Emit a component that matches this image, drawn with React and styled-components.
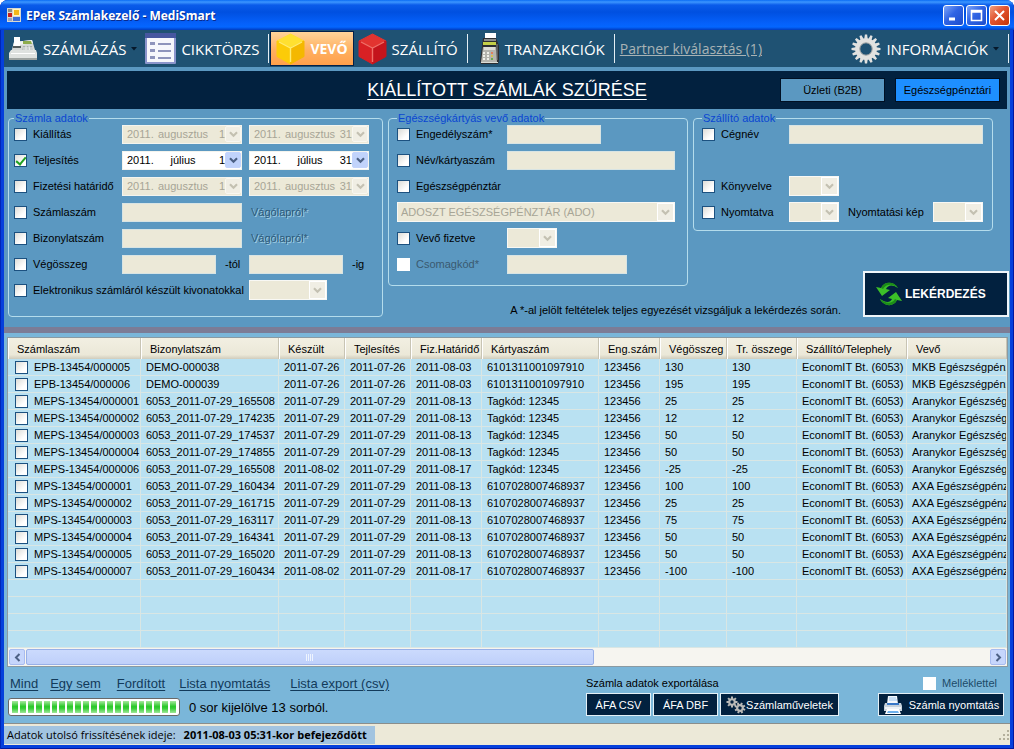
import React, { useState } from 'react';
import styled, { createGlobalStyle } from 'styled-components';

const GlobalStyle = createGlobalStyle`
    * {
        box-sizing: border-box;
    }

    body {
        margin: 0;
        background: #ffffff;
        font-family: "Liberation Sans", Arial, sans-serif;
        font-size: 11px;
        color: #000000;
    }

    button, input, select {
        font: inherit;
        color: inherit;
        margin: 0;
        padding: 0;
    }
`;

const Window = styled.div`
    min-height: 100vh;
    display: flex;
    flex-direction: column;
    padding: 0 4px 4px;
    border-radius: 8px 8px 0 0;
    overflow: hidden;
    background: #0540dc;
    box-shadow: inset 1px 0 0 #0026b8, inset -1px -1px 0 #0018a0;
`;

const TitleBar = styled.header`
    height: 30px;
    margin: 0 -4px;
    padding: 0 4px 0 7px;
    display: flex;
    align-items: center;
    gap: 5px;
    background: linear-gradient(#0a6cf4 0, #3c96ff 2px, #0a5cea 5px, #0050e0 12px, #0560fa 23px, #0466ff 27px, #003cc0 30px);
`;

const WindowTitle = styled.h1`
    flex: 1;
    margin: 0;
    font: bold 12px "Open Sans", sans-serif;
    color: #ffffff;
    text-shadow: 1px 1px 0 #0a2a8c;
`;

const WindowControls = styled.div`
    display: flex;
    gap: 2px;
`;

const ControlButton = styled.button`
    width: 21px;
    height: 21px;
    border: 1px solid #ffffff;
    border-radius: 3px;
    background: ${props => props.$close
        ? 'linear-gradient(135deg, #f0a080, #e25430 45%, #c43408)'
        : 'linear-gradient(135deg, #7fa6f8, #3064e4 45%, #1c4ccc)'};
    display: flex;
    align-items: center;
    justify-content: center;
`;

const Toolbar = styled.nav`
    height: 37px;
    padding-left: 4px;
    display: flex;
    align-items: center;
    background: #1f5273;
    color: #ffffff;
    font-family: "Open Sans", sans-serif;
    font-size: 15px;
`;

const ToolButton = styled.button`
    height: 35px;
    padding: 0 ${props => props.$active ? '5px' : '3px'};
    display: flex;
    align-items: center;
    gap: 5px;
    white-space: nowrap;
    border: 1px solid ${props => props.$active ? '#02214a' : 'transparent'};
    background: ${props => props.$active ? 'linear-gradient(#ffd49a, #ffb060 55%, #ffa04c)' : 'none'};
    font-weight: ${props => props.$active ? 700 : 400};
    font-size: ${props => props.$active ? '14px' : '15px'};

    &:first-child {
        padding-left: 0;
    }
`;

const Separator = styled.span`
    width: 1px;
    height: 29px;
    margin: 0 ${props => props.$wide ? '8px' : '1px'} 0 5px;
    background: #e4eef4;
`;

const PartnerLink = styled.a`
    margin-left: -3px;
    font-size: 14px;
    color: #a9b3b5;
    white-space: nowrap;
`;

const Spacer = styled.span`
    flex: 1;
`;

const Banner = styled.div`
    height: 46px;
    padding: 4px 3px;
    background: #5b98c1;
`;

const BannerInner = styled.div`
    height: 38px;
    padding: 0 7px;
    display: grid;
    grid-template-columns: 1fr auto 1fr;
    align-items: center;
    background: #02213f;
`;

const BannerTitle = styled.h2`
    grid-column: 2;
    margin: 0;
    font-size: 18px;
    font-weight: 400;
    color: #ffffff;
    text-decoration: underline;
    text-underline-offset: 3px;
`;

const ModeButtons = styled.div`
    display: flex;
    justify-content: flex-end;
    gap: 10px;
`;

const ModeButton = styled.button`
    width: 105px;
    height: 24px;
    border: 1px solid #001024;
    background: ${props => props.$active ? '#1e8fff' : '#5b98c1'};
`;

const Filters = styled.form`
    padding: 0 1px 10px 4px;
    margin-top: -1px;
    display: grid;
    grid-template-columns: minmax(0, 375fr) minmax(0, 300fr) minmax(0, 316fr);
    grid-template-rows: auto 1fr;
    column-gap: 5px;
    background: #5b98c1;
`;

const Group = styled.fieldset`
    min-width: 0;
    margin: 0 ${props => props.$inset ? '16px' : '0'} 0 0;
    padding: 0 ${props => props.$pad || '8px'} ${props => props.$bottom || '8px'};
    border: 1px solid #b4dcec;
    border-radius: 4px;
    align-self: start;
    grid-column: ${props => props.$column};
    grid-row: ${props => props.$tall ? '1 / span 2' : '1'};
`;

const Legend = styled.legend`
    height: 12px;
    padding: 0 1px;
    line-height: 12px;
    color: #0a46d2;
`;

const Rows = styled.div`
    display: grid;
    grid-template-columns: ${props => props.$columns};
    grid-auto-rows: 20px;
    gap: 6px 7px;
    align-items: center;
`;

const Cell = styled.div`
    display: flex;
    align-items: center;
    gap: 9px;
    white-space: nowrap;
    grid-column: ${props => props.$span ? `span ${props.$span}` : 'auto'};
`;

const CheckLabel = styled.label`
    display: flex;
    align-items: center;
    gap: 6px;
    white-space: nowrap;
    grid-column: ${props => props.$span ? `span ${props.$span}` : 'auto'};
    color: ${props => props.$dim || 'inherit'};
`;

const Tick = styled.input.attrs({ type: 'checkbox' })`
    appearance: none;
    flex: none;
    width: 13px;
    height: 13px;
    display: flex;
    justify-content: center;
    border: 1px solid #1c5180;
    background: linear-gradient(135deg, #dcdcd7, #ffffff 70%);

    &:disabled {
        border-color: #ffffff;
        background: #ffffff;
    }

    &:checked::after {
        content: "";
        width: 4px;
        height: 8px;
        border: solid #21a121;
        border-width: 0 2px 2px 0;
        transform: rotate(40deg);
    }
`;

const TextField = styled.input`
    width: ${props => props.$width || '100%'};
    height: 19px;
    border: 1px solid #d8e4e4;
    background: #ece9d8;
`;

const SelectBox = styled.div`
    position: relative;
    width: ${props => props.$width || '100%'};
    grid-column: ${props => props.$span ? `span ${props.$span}` : 'auto'};
`;

const SelectField = styled.select`
    appearance: none;
    width: 100%;
    height: 20px;
    padding-left: 3px;
    display: block;
    border: 1px solid #f8f8f4;
    border-radius: 0;
    background: #ece9d8;
    color: #a7a596;
    opacity: 1;
`;

const SelectArrow = styled.span`
    position: absolute;
    top: 1px;
    right: 1px;
    width: 17px;
    height: 18px;
    display: flex;
    align-items: center;
    justify-content: center;
    border: 1px solid #ffffff;
    background: #f0eee4;
    pointer-events: none;
`;

const DateBox = styled.div`
    width: 100%;
    height: 19px;
    padding-left: 4px;
    display: flex;
    align-items: center;
    border: 1px solid #f4f4ee;
    background: ${props => props.$off ? '#ece9d8' : '#ffffff'};
    color: ${props => props.$off ? '#a7a596' : '#000000'};
`;

const DatePart = styled.input`
    width: ${props => props.$width};
    min-width: 0;
    flex: ${props => props.$grow ? 1 : 'none'};
    border: 0;
    background: none;
    text-align: ${props => props.$align || 'left'};
`;

const DateButton = styled.button`
    width: 16px;
    height: 16px;
    display: flex;
    align-items: center;
    justify-content: center;
    border: 1px solid ${props => props.disabled ? '#f8f7f0' : '#c4d4fc'};
    border-radius: 2px;
    background: ${props => props.disabled ? '#f0eee4' : '#c1d3fb'};
`;

const PasteButton = styled.button`
    padding-left: 2px;
    border: 0;
    background: none;
    text-align: left;
    color: #2c5878;
    text-shadow: 1px 1px 0 #a4d0e4;
`;

const Note = styled.p`
    grid-column: 2 / 4;
    grid-row: 2;
    align-self: end;
    justify-self: end;
    margin: 0;
    padding-right: 168px;
    line-height: 13px;
    white-space: nowrap;
`;

const QueryButton = styled.button`
    grid-column: 3;
    grid-row: 1 / 3;
    align-self: end;
    justify-self: end;
    width: 146px;
    height: 46px;
    padding-left: 10px;
    display: flex;
    align-items: center;
    gap: 2px;
    border: 2px solid #f0f6fa;
    background: #02213f;
    color: #ffffff;
    font-size: 12px;
    font-weight: 700;
`;

const Splitter = styled.div`
    height: 6px;
    background: #7c7c96;
`;

const Results = styled.section`
    flex: 1;
    padding: 4px 2px 0 3px;
    display: flex;
    flex-direction: column;
    background: #7ab6d9;
`;

const ListFrame = styled.div`
    flex: 1;
    display: flex;
    flex-direction: column;
    border: 1px solid #8a9aa2;
    background: #b9e1f2;
`;

const List = styled.table`
    width: 100%;
    table-layout: fixed;
    border-collapse: separate;
    border-spacing: 0;
    white-space: nowrap;
`;

const HeadCell = styled.th`
    height: 21px;
    padding: 0 0 0 9px;
    overflow: hidden;
    text-align: left;
    font-weight: 400;
    background: linear-gradient(#f2efe2, #ebe8d8 80%, #d0ccbc);
    border-right: 1px solid #c8c4b4;
    box-shadow: inset 1px 0 0 #ffffff;
`;

const BodyCell = styled.td`
    height: 17px;
    padding: 0 0 0 5px;
    overflow: hidden;
    line-height: 14px;
    border-right: 1px solid #d9e6e4;
    border-bottom: 1px solid #d9e6e4;

    &:first-child {
        padding-left: 7px;
    }
`;

const ScrollBar = styled.div`
    height: 18px;
    margin-top: auto;
    padding: 1px;
    display: flex;
    gap: 1px;
    background: #f6f5f0;
`;

const ScrollButton = styled.button`
    width: 16px;
    display: flex;
    align-items: center;
    justify-content: center;
    border: 1px solid #a8bcf0;
    border-radius: 2px;
    background: #c6d6fc;
`;

const ScrollTrack = styled.div`
    flex: 1;
`;

const ScrollThumb = styled.div`
    width: 59%;
    height: 16px;
    display: flex;
    align-items: center;
    justify-content: center;
    border: 1px solid #98b0e8;
    border-radius: 2px;
    background: linear-gradient(#cbdafd, #bfd0fa);
`;

const Footer = styled.footer`
    height: 56px;
    padding: 8px 6px 0 4px;
    display: flex;
    background: #7ab6d9;
`;

const FooterLeft = styled.div`
    flex: 0 1 578px;
`;

const LinkRow = styled.div`
    height: 17px;
    padding-left: 2px;
    display: flex;
    align-items: center;
    font-size: 13px;
`;

const ActionLink = styled.a`
    margin-right: ${props => props.$gap || '12px'};
    color: #123a5a;
    text-underline-offset: 2px;
`;

const ProgressRow = styled.div`
    margin-top: 6px;
    display: flex;
    align-items: center;
    gap: 9px;
    font-size: 13px;
`;

const Progress = styled.div`
    width: 172px;
    height: 18px;
    padding: 2px 3px;
    display: flex;
    gap: 2px;
    border: 1px solid #686868;
    border-radius: 3px;
    background: #ffffff;
`;

const ProgressBlock = styled.span`
    flex: 1;
    background: linear-gradient(#a8e8a0, #2cc82c 45%, #34cc34 60%, #a0e898);
`;

const FooterBlock = styled.div`
    margin-left: ${props => props.$right ? 'auto' : '0'};
    display: flex;
    flex-direction: column;
    align-items: ${props => props.$right ? 'flex-end' : 'flex-start'};
    gap: 2px;
`;

const Caption = styled.div`
    height: 16px;
    display: flex;
    align-items: center;
    padding-right: ${props => props.$right ? '7px' : '0'};
`;

const ButtonRow = styled.div`
    display: flex;
    gap: 2px;
`;

const DarkButton = styled.button`
    width: ${props => props.$width};
    height: 23px;
    display: flex;
    align-items: center;
    justify-content: center;
    gap: ${props => props.$gap || '0'};
    border: 1px solid #e4f0f6;
    background: #02213f;
    color: #ffffff;
    white-space: nowrap;
`;

const StatusBar = styled.div`
    height: 22px;
    display: flex;
    align-items: center;
    justify-content: space-between;
    border-top: 1px solid #8a8e8c;
    background: #ece9d8;
    font-family: "Open Sans", sans-serif;
`;

const StatusText = styled.div`
    height: 18px;
    padding: 0 8px 0 3px;
    display: flex;
    align-items: center;
    gap: 8px;
    background: #a2c4e0;
    white-space: nowrap;
`;

const columns = [
    { title: 'Számlaszám', width: 133 },
    { title: 'Bizonylatszám', width: 138 },
    { title: 'Készült', width: 66 },
    { title: 'Tejlesítés', width: 66 },
    { title: 'Fiz.Határidő', width: 71 },
    { title: 'Kártyaszám', width: 117 },
    { title: 'Eng.szám', width: 61 },
    { title: 'Végösszeg', width: 67 },
    { title: 'Tr. összege', width: 70 },
    { title: 'Szállító/Telephely', width: 110 },
    { title: 'Vevő' },
];

const MKB = 'MKB Egészségpénztár';
const ARANYKOR = 'Aranykor Egészségpénztár';
const AXA = 'AXA Egészségpénztár';

const invoices = [
    ['EPB-13454/000005', 'DEMO-000038', '2011-07-26', '2011-07-26', '2011-08-03', '6101311001097910', 130, MKB],
    ['EPB-13454/000006', 'DEMO-000039', '2011-07-26', '2011-07-26', '2011-08-03', '6101311001097910', 195, MKB],
    ['MEPS-13454/000001', '6053_2011-07-29_165508', '2011-07-29', '2011-07-29', '2011-08-13', 'Tagkód: 12345', 25, ARANYKOR],
    ['MEPS-13454/000002', '6053_2011-07-29_174235', '2011-07-29', '2011-07-29', '2011-08-13', 'Tagkód: 12345', 12, ARANYKOR],
    ['MEPS-13454/000003', '6053_2011-07-29_174537', '2011-07-29', '2011-07-29', '2011-08-13', 'Tagkód: 12345', 50, ARANYKOR],
    ['MEPS-13454/000004', '6053_2011-07-29_174855', '2011-07-29', '2011-07-29', '2011-08-13', 'Tagkód: 12345', 50, ARANYKOR],
    ['MEPS-13454/000006', '6053_2011-07-29_165508', '2011-08-02', '2011-07-29', '2011-08-17', 'Tagkód: 12345', -25, ARANYKOR],
    ['MPS-13454/000001', '6053_2011-07-29_160434', '2011-07-29', '2011-07-29', '2011-08-13', '6107028007468937', 100, AXA],
    ['MPS-13454/000002', '6053_2011-07-29_161715', '2011-07-29', '2011-07-29', '2011-08-13', '6107028007468937', 25, AXA],
    ['MPS-13454/000003', '6053_2011-07-29_163117', '2011-07-29', '2011-07-29', '2011-08-13', '6107028007468937', 75, AXA],
    ['MPS-13454/000004', '6053_2011-07-29_164341', '2011-07-29', '2011-07-29', '2011-08-13', '6107028007468937', 50, AXA],
    ['MPS-13454/000005', '6053_2011-07-29_165020', '2011-07-29', '2011-07-29', '2011-08-13', '6107028007468937', 50, AXA],
    ['MPS-13454/000007', '6053_2011-07-29_160434', '2011-08-02', '2011-07-29', '2011-08-17', '6107028007468937', -100, AXA],
];

const Chevron = ({ color = '#c4c1b2' }) => (
    <svg width="9" height="7" viewBox="0 0 9 7">
        <path d="M1 1.2 4.5 4.7 8 1.2" fill="none" stroke={color} strokeWidth="2.2" />
    </svg>
);

const SideChevron = ({ right }) => (
    <svg width="7" height="9" viewBox="0 0 7 9">
        <path d={right ? 'M1.5 1 5 4.5 1.5 8' : 'M5.5 1 2 4.5 5.5 8'} fill="none" stroke="#4d6185" strokeWidth="2" />
    </svg>
);

const MenuArrow = () => (
    <svg width="6" height="4" viewBox="0 0 6 4"><path d="M0 0h6L3 3.5z" fill="#06182a" /></svg>
);

const AppIcon = () => (
    <svg width="14" height="14" viewBox="0 0 14 14">
        <rect width="14" height="14" fill="#d8d8d0" />
        <rect x="1" y="5" width="4" height="4" fill="#c8201c" />
        <rect x="6" y="1" width="7" height="7" fill="#fff6c0" />
        <rect x="7" y="2" width="5" height="5" fill="#f4b818" />
        <rect x="1" y="1" width="4" height="3" fill="#8c8c88" />
        <rect x="1" y="10" width="4" height="3" fill="#9aa4c0" />
        <rect x="6" y="9" width="7" height="4" fill="#3d6fd8" />
    </svg>
);

const RegisterIcon = () => (
    <svg width="29" height="24" viewBox="0 0 29 24">
        <path d="M5 5 23 3 27 16H2z" fill="#d5d8d6" />
        <path d="M5 5 23 3 24 6 4 9z" fill="#f0f2f0" />
        <path d="M5 0h6v10H5z" fill="#ffffff" />
        <path d="M4 9h8v2H4z" fill="#555d5c" />
        <path d="M14 4h8l1 3h-9z" fill="#8dac4c" />
        <path d="M14 9h9l2 6H13z" fill="#aab0b0" />
        <path d="M14 11h10M14 13h11M17 9v6M20 9l1 6" stroke="#eceeee" />
        <path d="M2 13h25l1 3v7H0v-7z" fill="#dfe2e0" />
        <path d="M0 21h28v2H0z" fill="#9da3a1" />
        <path d="M2 16h24v1H2z" fill="#ffffff" />
    </svg>
);

const ListIcon = () => (
    <svg width="31" height="31" viewBox="0 0 31 31">
        <rect width="31" height="31" rx="1" fill="#8b95cc" />
        <rect width="31" height="5" fill="#4657a0" />
        <rect x="2" y="5" width="27" height="24" fill="#f6f7fc" />
        <g fill="#8e94bc">
            <rect x="5" y="9" width="5" height="3" /><rect x="5" y="16" width="5" height="3" /><rect x="5" y="23" width="5" height="3" />
            <rect x="13" y="10" width="13" height="2" /><rect x="13" y="17" width="13" height="2" /><rect x="13" y="24" width="13" height="2" />
        </g>
    </svg>
);

const Cube = ({ top, left, right, line }) => (
    <svg width="29" height="32" viewBox="0 0 29 32">
        <path d="M14.5 1 28 8 14.5 15 1 8z" fill={top} stroke={top} strokeLinejoin="round" />
        <path d="M1 8 14.5 15v16L1 23.5z" fill={left} stroke={left} strokeLinejoin="round" />
        <path d="M28 8 14.5 15v16L28 23.5z" fill={right} stroke={right} strokeLinejoin="round" />
        <path d="M3 9 14.5 15 26 9M14.5 15v14" fill="none" stroke={line} strokeWidth="1.4" />
    </svg>
);

const TerminalIcon = () => (
    <svg width="20" height="32" viewBox="0 0 20 32">
        <path d="M3 5h13l2 5 1 3v15l-1 3H1l-1-3 2-15z" fill="#2c2e32" />
        <path d="M5 0h11v5H5z" fill="#ffffff" />
        <path d="M4 6h12v2H4z" fill="#8a8c8a" />
        <path d="M3 9h13v3H3z" fill="#c3cf48" />
        <path d="M3 14h13l1 15H1z" fill="#b4b4ae" />
        <path d="M4 14h11v3H4z" fill="#dcdcd6" />
        <path d="M3 20h2M7 20h2M3 23h2M7 23h2M3 26h2M7 26h2" stroke="#f0f0ea" strokeWidth="2" />
        <path d="M11 20h2" stroke="#e08060" strokeWidth="2" />
        <path d="M11 23h2" stroke="#d8c050" strokeWidth="2" />
        <path d="M11 26h2" stroke="#68a850" strokeWidth="2" />
        <path d="M17 11v16" stroke="#8a8c8a" />
        <path d="M1 29h17v1H1z" fill="#dcdcd6" />
    </svg>
);

const Gear = ({ size, color, hole, teeth = 16 }) => (
    <svg width={size} height={size} viewBox="-15 -15 30 30">
        {Array.from({ length: teeth }, (_, i) => (
            <path key={i} d="M-1.9-9-1.1-14.5H1.1L1.9-9z" fill={color} transform={`rotate(${i * 360 / teeth})`} />
        ))}
        <circle r="8.5" fill="none" stroke={color} strokeWidth="4.6" />
        <circle r="6.2" fill="none" stroke={hole} strokeWidth="1" />
    </svg>
);

const GearPair = () => (
    <svg width="20" height="18" viewBox="0 0 20 18">
        {[[6, 6, 0], [14, 12, 20]].map(([x, y, turn]) => (
            <g key={x} transform={`translate(${x} ${y}) rotate(${turn})`}>
                {[0, 45, 90, 135].map(a => <rect key={a} x="-1" y="-5.5" width="2" height="11" fill="#b9b9b7" transform={`rotate(${a})`} />)}
                <circle r="3.8" fill="#b9b9b7" />
                <circle r="1.7" fill="#02213f" />
            </g>
        ))}
    </svg>
);

const RefreshIcon = () => (
    <svg width="28" height="26" viewBox="0 0 28 26">
        <path d="M23 7C19 0 9 0 6 7L1 6l6 9 8-6-4-1c2-4 6-5 12-1z" fill="#3cc028" />
        <path d="M23 7C19 0 9 0 6 7l2 1c3-5 9-6 15-1z" fill="#1c8c18" />
        <path d="M5 18c4 8 14 8 17 1l5 1-6-9-8 6 4 1c-2 4-6 4-12 0z" fill="#3cc028" />
        <path d="M5 18c4 8 14 8 17 1l-2-1c-3 5-9 5-15 0z" fill="#1c8c18" />
    </svg>
);

const PrinterIcon = () => (
    <svg width="20" height="20" viewBox="0 0 20 20">
        <path d="M5 1h9l1 8H4z" fill="#f4f8fc" />
        <path d="M6 3h7M6 5h8" stroke="#9cc4ec" />
        <path d="M2 8h16l1 3v5H1v-5z" fill="#c6d2dc" />
        <path d="M4 8h12v2H4z" fill="#3878c8" />
        <path d="M2 12h16v2H2z" fill="#eef3f7" />
        <path d="M4 14h12l2 5H2z" fill="#ffffff" />
        <path d="M5 16h10l1 2H4z" fill="#6cb0ec" />
    </svg>
);

const Grip = () => (
    <svg width="13" height="13" viewBox="0 0 13 13" fill="#b4b09c">
        {[[10, 2], [6, 6], [10, 6], [2, 10], [6, 10], [10, 10]].map(([x, y]) => <rect key={`${x}-${y}`} x={x} y={y} width="2" height="2" />)}
    </svg>
);

function Check({ label, span, dim, ...rest }) {
    return (
        <CheckLabel $span={span} $dim={dim}>
            <Tick {...rest} />
            {label}
        </CheckLabel>
    )
}

function Select({ label, width, span, children }) {
    return (
        <SelectBox $width={width} $span={span}>
            <SelectField aria-label={label} disabled>{children}</SelectField>
            <SelectArrow><Chevron /></SelectArrow>
        </SelectBox>
    )
}

function DatePicker({ label, month, day, disabled }) {
    return (
        <DateBox $off={disabled} role="group" aria-label={label}>
            <DatePart $width="28px" aria-label="Év" defaultValue="2011." disabled={disabled} />
            <DatePart $grow $width="50px" $align="center" aria-label="Hónap" defaultValue={month} disabled={disabled} />
            <DatePart $width="14px" $align="right" aria-label="Nap" defaultValue={day} disabled={disabled} />
            <DateButton type="button" aria-label="Naptár" disabled={disabled}>
                <Chevron color={disabled ? '#c4c1b2' : '#4d6185'} />
            </DateButton>
        </DateBox>
    )
}

function App() {
    const [mode, setMode] = useState('fund');

    return (
        <>
            <GlobalStyle />
            <Window>
                <TitleBar>
                    <AppIcon />
                    <WindowTitle>EPeR Számlakezelő - MediSmart</WindowTitle>
                    <WindowControls>
                        <ControlButton aria-label="Kis méret">
                            <svg width="13" height="13"><path d="M2 10h6" stroke="#fff" strokeWidth="3" /></svg>
                        </ControlButton>
                        <ControlButton aria-label="Teljes méret">
                            <svg width="13" height="13"><path d="M1.5 1.5h10v10h-10zM1 3h11" fill="none" stroke="#fff" strokeWidth="1.6" /></svg>
                        </ControlButton>
                        <ControlButton $close aria-label="Bezárás">
                            <svg width="13" height="13"><path d="M2 2l9 9M11 2l-9 9" stroke="#fff" strokeWidth="2" /></svg>
                        </ControlButton>
                    </WindowControls>
                </TitleBar>

                <Toolbar>
                    <ToolButton><RegisterIcon />SZÁMLÁZÁS<MenuArrow /></ToolButton>
                    <ToolButton><ListIcon />CIKKTÖRZS</ToolButton>
                    <Separator />
                    <ToolButton $active><Cube top="#ffe030" left="#fccb08" right="#f4b800" line="#ffec70" />VEVŐ</ToolButton>
                    <ToolButton><Cube top="#e23430" left="#d82024" right="#c4141c" line="#f07068" />SZÁLLÍTÓ</ToolButton>
                    <Separator $wide />
                    <ToolButton><TerminalIcon />TRANZAKCIÓK</ToolButton>
                    <Separator $wide />
                    <PartnerLink href="#partner">Partner kiválasztás (1)</PartnerLink>
                    <Spacer />
                    <ToolButton><Gear size={30} color="#e2e2e0" hole="#a8a8a6" />INFORMÁCIÓK<MenuArrow /></ToolButton>
                    <Separator />
                </Toolbar>

                <Banner>
                    <BannerInner>
                        <BannerTitle>KIÁLLÍTOTT SZÁMLÁK SZŰRÉSE</BannerTitle>
                        <ModeButtons>
                            <ModeButton $active={mode === 'b2b'} onClick={() => setMode('b2b')}>Üzleti (B2B)</ModeButton>
                            <ModeButton $active={mode === 'fund'} onClick={() => setMode('fund')}>Egészségpénztári</ModeButton>
                        </ModeButtons>
                    </BannerInner>
                </Banner>

                <Filters onSubmit={e => e.preventDefault()}>
                    <Group $column={1} $tall $pad="5px" $bottom="16px">
                        <Legend>Számla adatok</Legend>
                        <Rows $columns="101px 120px 120px">
                            <Check label="Kiállítás" />
                            <DatePicker label="Kiállítás kezdete" month="augusztus" day="1" disabled />
                            <DatePicker label="Kiállítás vége" month="augusztus" day="31" disabled />
                            <Check label="Teljesítés" defaultChecked />
                            <DatePicker label="Teljesítés kezdete" month="július" day="1" />
                            <DatePicker label="Teljesítés vége" month="július" day="31" />
                            <Check label="Fizetési határidő" />
                            <DatePicker label="Fizetési határidő kezdete" month="augusztus" day="1" disabled />
                            <DatePicker label="Fizetési határidő vége" month="augusztus" day="31" disabled />
                            <Check label="Számlaszám" />
                            <TextField aria-label="Számlaszám" disabled />
                            <PasteButton type="button" disabled>Vágólapról*</PasteButton>
                            <Check label="Bizonylatszám" />
                            <TextField aria-label="Bizonylatszám" disabled />
                            <PasteButton type="button" disabled>Vágólapról*</PasteButton>
                            <Check label="Végösszeg" />
                            <Cell><TextField $width="94px" aria-label="Végösszeg alsó határa" disabled />-tól</Cell>
                            <Cell><TextField $width="94px" aria-label="Végösszeg felső határa" disabled />-ig</Cell>
                            <Check label="Elektronikus számláról készült kivonatokkal" span={2} />
                            <Select label="Kivonat" width="78px" />
                        </Rows>
                    </Group>

                    <Group $column={2} $bottom="11px">
                        <Legend>Egészségkártyás vevő adatok</Legend>
                        <Rows $columns="103px minmax(0, 168px)">
                            <Check label="Engedélyszám*" />
                            <TextField $width="94px" aria-label="Engedélyszám" disabled />
                            <Check label="Név/kártyaszám" />
                            <TextField aria-label="Név/kártyaszám" disabled />
                            <Check label="Egészségpénztár" span={2} />
                            <Select label="Egészségpénztár" span={2}>
                                <option>ADOSZT EGÉSZSÉGPÉNZTÁR (ADO)</option>
                            </Select>
                            <Check label="Vevő fizetve" />
                            <Select label="Vevő fizetve" width="50px" />
                            <Check label="Csomagkód*" dim="#3a5a70" disabled />
                            <TextField $width="120px" aria-label="Csomagkód" disabled />
                        </Rows>
                    </Group>

                    <Group $column={3} $inset>
                        <Legend>Szállító adatok</Legend>
                        <Rows $columns="80px minmax(0, 194px)">
                            <Check label="Cégnév" />
                            <TextField aria-label="Cégnév" disabled />
                            <Cell $span={2} />
                            <Check label="Könyvelve" />
                            <Select label="Könyvelve" width="50px" />
                            <Check label="Nyomtatva" />
                            <Cell>
                                <Select label="Nyomtatva" width="50px" />
                                Nyomtatási kép
                                <Select label="Nyomtatási kép" width="50px" />
                            </Cell>
                        </Rows>
                    </Group>

                    <Note>A *-al jelölt feltételek teljes egyezését vizsgáljuk a lekérdezés során.</Note>
                    <QueryButton type="submit"><RefreshIcon />LEKÉRDEZÉS</QueryButton>
                </Filters>

                <Splitter />

                <Results>
                    <ListFrame>
                        <List>
                            <colgroup>
                                {columns.map(col => <col key={col.title} width={col.width} />)}
                            </colgroup>
                            <thead>
                                <tr>{columns.map(col => <HeadCell key={col.title}>{col.title}</HeadCell>)}</tr>
                            </thead>
                            <tbody>
                                {invoices.map(([id, doc, made, done, due, card, sum, buyer]) => (
                                    <tr key={id}>
                                        <BodyCell><Check label={id} /></BodyCell>
                                        <BodyCell>{doc}</BodyCell>
                                        <BodyCell>{made}</BodyCell>
                                        <BodyCell>{done}</BodyCell>
                                        <BodyCell>{due}</BodyCell>
                                        <BodyCell>{card}</BodyCell>
                                        <BodyCell>123456</BodyCell>
                                        <BodyCell>{sum}</BodyCell>
                                        <BodyCell>{sum}</BodyCell>
                                        <BodyCell>EconomIT Bt. (6053)</BodyCell>
                                        <BodyCell>{buyer}</BodyCell>
                                    </tr>
                                ))}
                                {[1, 2, 3, 4].map(n => (
                                    <tr key={n}>{columns.map(col => <BodyCell key={col.title} />)}</tr>
                                ))}
                            </tbody>
                        </List>
                        <ScrollBar>
                            <ScrollButton aria-label="Görgetés balra"><SideChevron /></ScrollButton>
                            <ScrollTrack>
                                <ScrollThumb>
                                    <svg width="9" height="7"><path d="M.5 0v7M2.5 0v7M4.5 0v7M6.5 0v7" stroke="#eef4fe" /></svg>
                                </ScrollThumb>
                            </ScrollTrack>
                            <ScrollButton aria-label="Görgetés jobbra"><SideChevron right /></ScrollButton>
                        </ScrollBar>
                    </ListFrame>
                </Results>

                <Footer>
                    <FooterLeft>
                        <LinkRow>
                            <ActionLink href="#mind">Mind</ActionLink>
                            <ActionLink href="#egysem" $gap="16px">Egy sem</ActionLink>
                            <ActionLink href="#forditott" $gap="14px">Fordított</ActionLink>
                            <ActionLink href="#nyomtatas" $gap="20px">Lista nyomtatás</ActionLink>
                            <ActionLink href="#export">Lista export (csv)</ActionLink>
                        </LinkRow>
                        <ProgressRow>
                            <Progress role="progressbar" aria-valuenow={100}>
                                {Array.from({ length: 21 }, (_, i) => <ProgressBlock key={i} />)}
                            </Progress>
                            0 sor kijelölve 13 sorból.
                        </ProgressRow>
                    </FooterLeft>
                    <FooterBlock>
                        <Caption>Számla adatok exportálása</Caption>
                        <ButtonRow>
                            <DarkButton $width="65px">ÁFA CSV</DarkButton>
                            <DarkButton $width="65px">ÁFA DBF</DarkButton>
                            <DarkButton $width="119px"><GearPair />Számlaműveletek</DarkButton>
                        </ButtonRow>
                    </FooterBlock>
                    <FooterBlock $right>
                        <Caption $right><Check label="Melléklettel" dim="#1c4a68" disabled /></Caption>
                        <DarkButton $width="126px" $gap="6px"><PrinterIcon />Számla nyomtatás</DarkButton>
                    </FooterBlock>
                </Footer>

                <StatusBar>
                    <StatusText>Adatok utolsó frissítésének ideje: <b>2011-08-03 05:31-kor befejeződött</b></StatusText>
                    <Grip />
                </StatusBar>
            </Window>
        </>
    )
}

export default App
